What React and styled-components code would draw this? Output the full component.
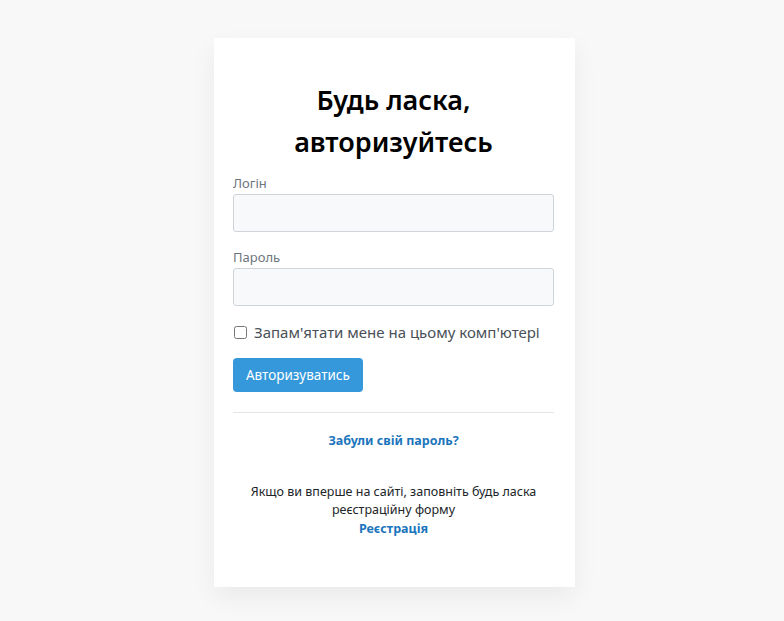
import React from 'react';
import styled, { createGlobalStyle } from 'styled-components';

const GlobalStyle = createGlobalStyle`
  body {
    margin: 0;
    background: #f8f8f8;
    font-family: "Noto Sans", "Open Sans", sans-serif;
    color: #212529;
  }
`;

const Page = styled.div`
  display: flex;
  justify-content: center;
  padding: 38px 0 0 5px;
  min-height: 621px;
  box-sizing: border-box;
`;

const Card = styled.div`
  width: 361px;
  box-sizing: border-box;
  background: #fff;
  padding: 41px 21px 49px 19px;
  box-shadow: 0 10px 24px rgba(0, 0, 0, 0.06);
  align-self: flex-start;
`;

const Title = styled.h1`
  margin: 0 0 11px;
  text-align: center;
  font-size: 27px;
  line-height: 42px;
  font-weight: 600;
  color: #000;
`;

const Field = styled.div`
  margin-bottom: 16px;
`;

const Label = styled.label`
  display: block;
  font-size: 13px;
  line-height: 18px;
  color: #6c757d;
  margin-bottom: 2px;
`;

const Input = styled.input`
  display: block;
  width: 100%;
  height: 38px;
  box-sizing: border-box;
  background: #f8f9fa;
  border: 1px solid #ced4da;
  border-radius: 3px;
  font: inherit;
`;

const CheckRow = styled.label`
  display: flex;
  align-items: center;
  gap: 7px;
  font-size: 15px;
  color: #495057;
  margin-top: 15px;
`;

const Check = styled.input`
  margin: 0 0 0 1px;
  width: 13px;
  height: 13px;
`;

const Button = styled.button`
  margin-top: 16px;
  height: 34px;
  padding: 0 13px;
  background: #3498db;
  color: #fff;
  border: none;
  border-radius: 4px;
  font-family: inherit;
  font-size: 13.5px;
`;

const Divider = styled.hr`
  border: none;
  border-top: 1px solid #e5e5e5;
  margin: 20px 0 0;
`;

const Center = styled.div`
  text-align: center;
  font-size: 12.5px;
  line-height: 18px;
  margin-top: ${p => p.$top}px;
`;

const Link = styled.a`
  color: #1b75bc;
  font-weight: 700;
  text-decoration: none;
`;

const BlockLink = styled(Link)`
  display: inline-block;
  margin-top: 1px;
`;

export default function App() {
  return (
    <>
      <GlobalStyle />
      <Page>
        <Card>
          <Title>Будь ласка,<br />авторизуйтесь</Title>
          <Field>
            <Label>Логін</Label>
            <Input type="text" />
          </Field>
          <Field>
            <Label>Пароль</Label>
            <Input type="password" />
          </Field>
          <CheckRow>
            <Check type="checkbox" />
            Запам'ятати мене на цьому комп'ютері
          </CheckRow>
          <Button>Авторизуватись</Button>
          <Divider />
          <Center $top={19}>
            <Link href="#">Забули свій пароль?</Link>
          </Center>
          <Center $top={33}>
            Якщо ви вперше на сайті, заповніть будь ласка<br />
            реєстраційну форму<br />
            <BlockLink href="#">Реєстрація</BlockLink>
          </Center>
        </Card>
      </Page>
    </>
  );
}
